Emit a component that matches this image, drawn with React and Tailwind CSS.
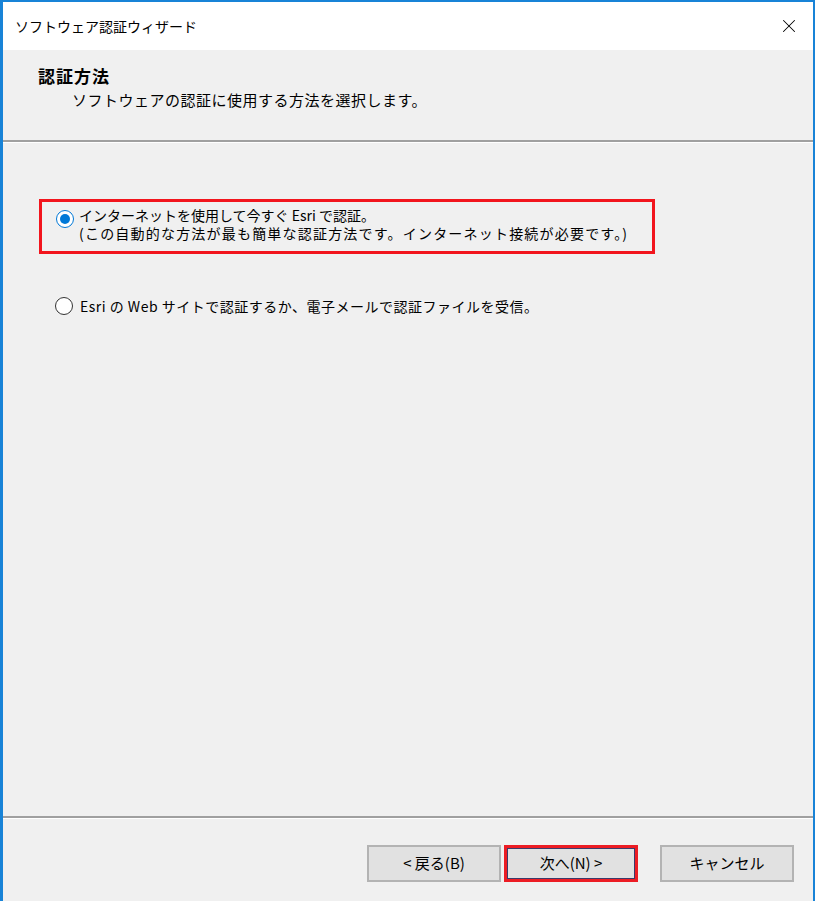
import { X } from 'lucide-react'

const font = { fontFamily: '"Noto Sans CJK JP", "Noto Sans", sans-serif' }

const Radio = ({ checked }) => (
  <span
    className={
      'flex items-center justify-center w-[18px] h-[18px] rounded-full border bg-white shrink-0 ' +
      (checked ? 'border-[#0078d7]' : 'border-[#333333]')
    }
  >
    {checked && <span className="w-[10px] h-[10px] rounded-full bg-[#0078d7]" />}
  </span>
)

const Button = ({ children, focused }) => (
  <button
    className={
      'w-[134px] h-[37px] bg-[#e1e1e1] text-[15px] text-black flex items-center justify-center ' +
      (focused
        ? 'border-[3px] border-[#ec1c24] shadow-[inset_0_0_0_1px_#3b3b6b]'
        : 'border-2 border-[#b3b3b3]')
    }
  >
    {children}
  </button>
)

export default function App() {
  return (
    <div className="w-[816px] h-[901px] bg-white" style={font}>
      <div className="w-[815px] h-[901px] flex flex-col border-l-[3px] border-r-2 border-t-2 border-[#1883d7] bg-[#f0f0f0]">
        {/* title bar */}
        <div className="h-[48px] bg-white flex items-center justify-between pl-[12px] pr-[13px] shrink-0">
          <span className="text-[14px] text-black">ソフトウェア認証ウィザード</span>
          <X size={22} strokeWidth={1.1} className="text-black" />
        </div>

        {/* header */}
        <div className="h-[90px] shrink-0 pt-[15px]">
          <div className="pl-[35px] text-[17px] font-bold leading-[22px] tracking-[1px] text-black">認証方法</div>
          <div className="pl-[69px] mt-[3px] text-[15px] leading-[20px] tracking-[0.5px] text-black">
            ソフトウェアの認証に使用する方法を選択します。
          </div>
        </div>
        <div className="h-[2px] bg-[#a0a0a0] shrink-0" />
        <div className="h-[1px] bg-white shrink-0" />

        {/* body */}
        <div className="flex-1 pt-[56px] pl-[36px]">
          <div className="w-[616px] h-[55px] border-[3px] border-[#f2151d] flex items-start pt-[4px] pl-[14px]">
            <div className="mt-[4px]">
              <Radio checked />
            </div>
            <div className="ml-[5px] text-[14px] leading-[18px] text-black">
              <div>インターネットを使用して今すぐ Esri で認証。</div>
              <div className="tracking-[1.2px]">(この自動的な方法が最も簡単な認証方法です。インターネット接続が必要です。)</div>
            </div>
          </div>

          <div className="flex items-center mt-[43px] pl-[16px]">
            <Radio />
            <span className="ml-[7px] text-[14px] leading-[18px] tracking-[0.5px] text-black">
              Esri の Web サイトで認証するか、電子メールで認証ファイルを受信。
            </span>
          </div>
        </div>

        {/* footer */}
        <div className="h-[2px] bg-[#a0a0a0] shrink-0" />
        <div className="h-[1px] bg-white shrink-0" />
        <div className="h-[82px] shrink-0 flex items-start justify-end pt-[26px] pr-[19px]">
          <Button>&lt; 戻る(B)</Button>
          <div className="ml-[3px]">
            <Button focused>次へ(N) &gt;</Button>
          </div>
          <div className="ml-[22px]">
            <Button>キャンセル</Button>
          </div>
        </div>
      </div>
    </div>
  )
}
